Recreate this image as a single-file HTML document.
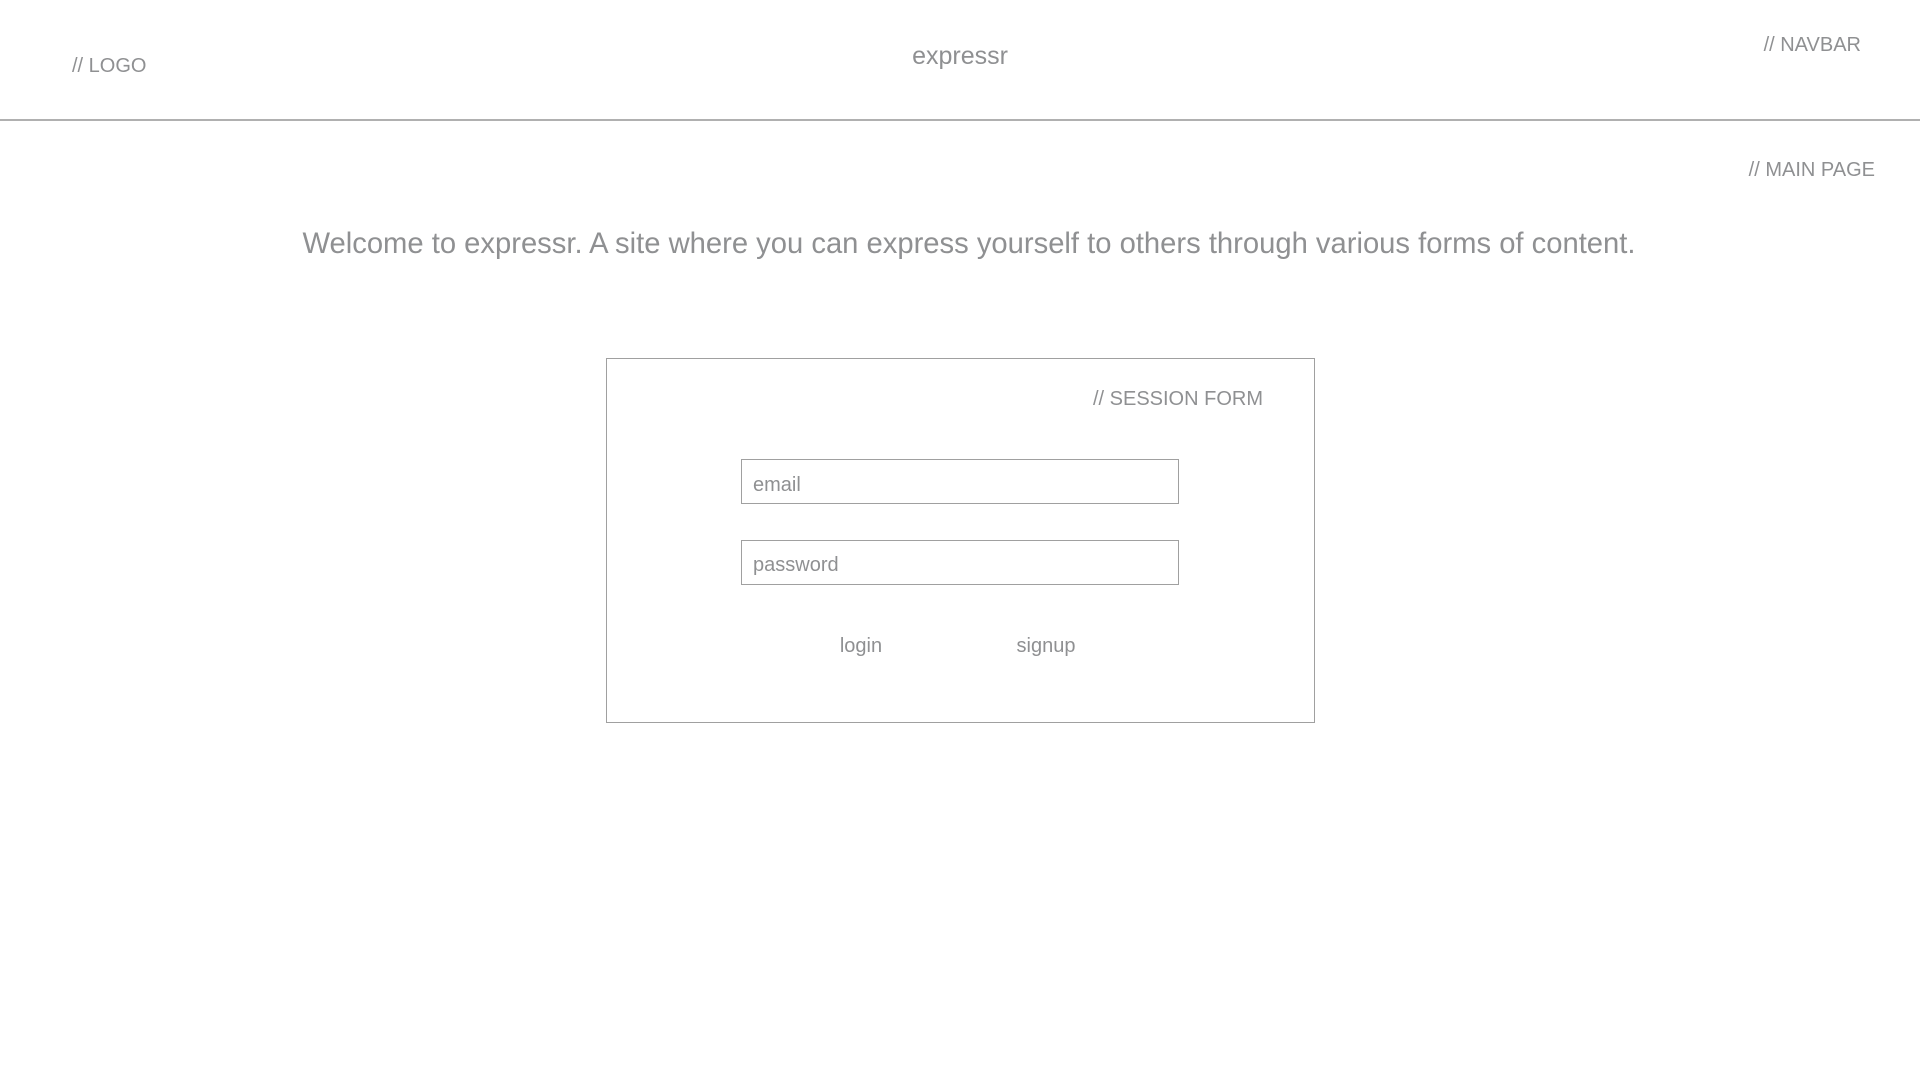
<!DOCTYPE html>
<html><head><style>
body{margin:0;width:1920px;height:1080px;background:#fff;font-family:"Liberation Sans",sans-serif;color:#8f9092;position:relative;overflow:hidden}
.t{position:absolute;white-space:nowrap;line-height:1}
.c{transform:translateX(-50%)}
.r{transform:translateX(-100%)}
.box{position:absolute;border:1.5px solid #a0a0a0;box-sizing:border-box}
</style></head><body>
<div class="t" style="left:72px;top:56px;font-size:20px">// LOGO</div>
<div class="t c" style="left:960px;top:44px;font-size:25px">expressr</div>
<div class="t r" style="left:1861px;top:35px;font-size:20px">// NAVBAR</div>
<div style="position:absolute;left:0;top:119px;width:1920px;height:2px;background:#b0b0b0"></div>
<div class="t r" style="left:1875px;top:160px;font-size:20px">// MAIN PAGE</div>
<div class="t c" style="left:969px;top:230px;font-size:29.2px">Welcome to expressr. A site where you can express yourself to others through various forms of content.</div>
<div class="box" style="left:606px;top:358px;width:709px;height:365px"></div>
<div class="t r" style="left:1263px;top:389px;font-size:20px">// SESSION FORM</div>
<div class="box" style="left:741px;top:459px;width:438px;height:45px"></div>
<div class="t" style="left:753px;top:475px;font-size:20px">email</div>
<div class="box" style="left:741px;top:540px;width:438px;height:45px"></div>
<div class="t" style="left:753px;top:555px;font-size:20px">password</div>
<div class="t c" style="left:861px;top:636px;font-size:20px">login</div>
<div class="t c" style="left:1046px;top:636px;font-size:20px">signup</div>
</body></html>
